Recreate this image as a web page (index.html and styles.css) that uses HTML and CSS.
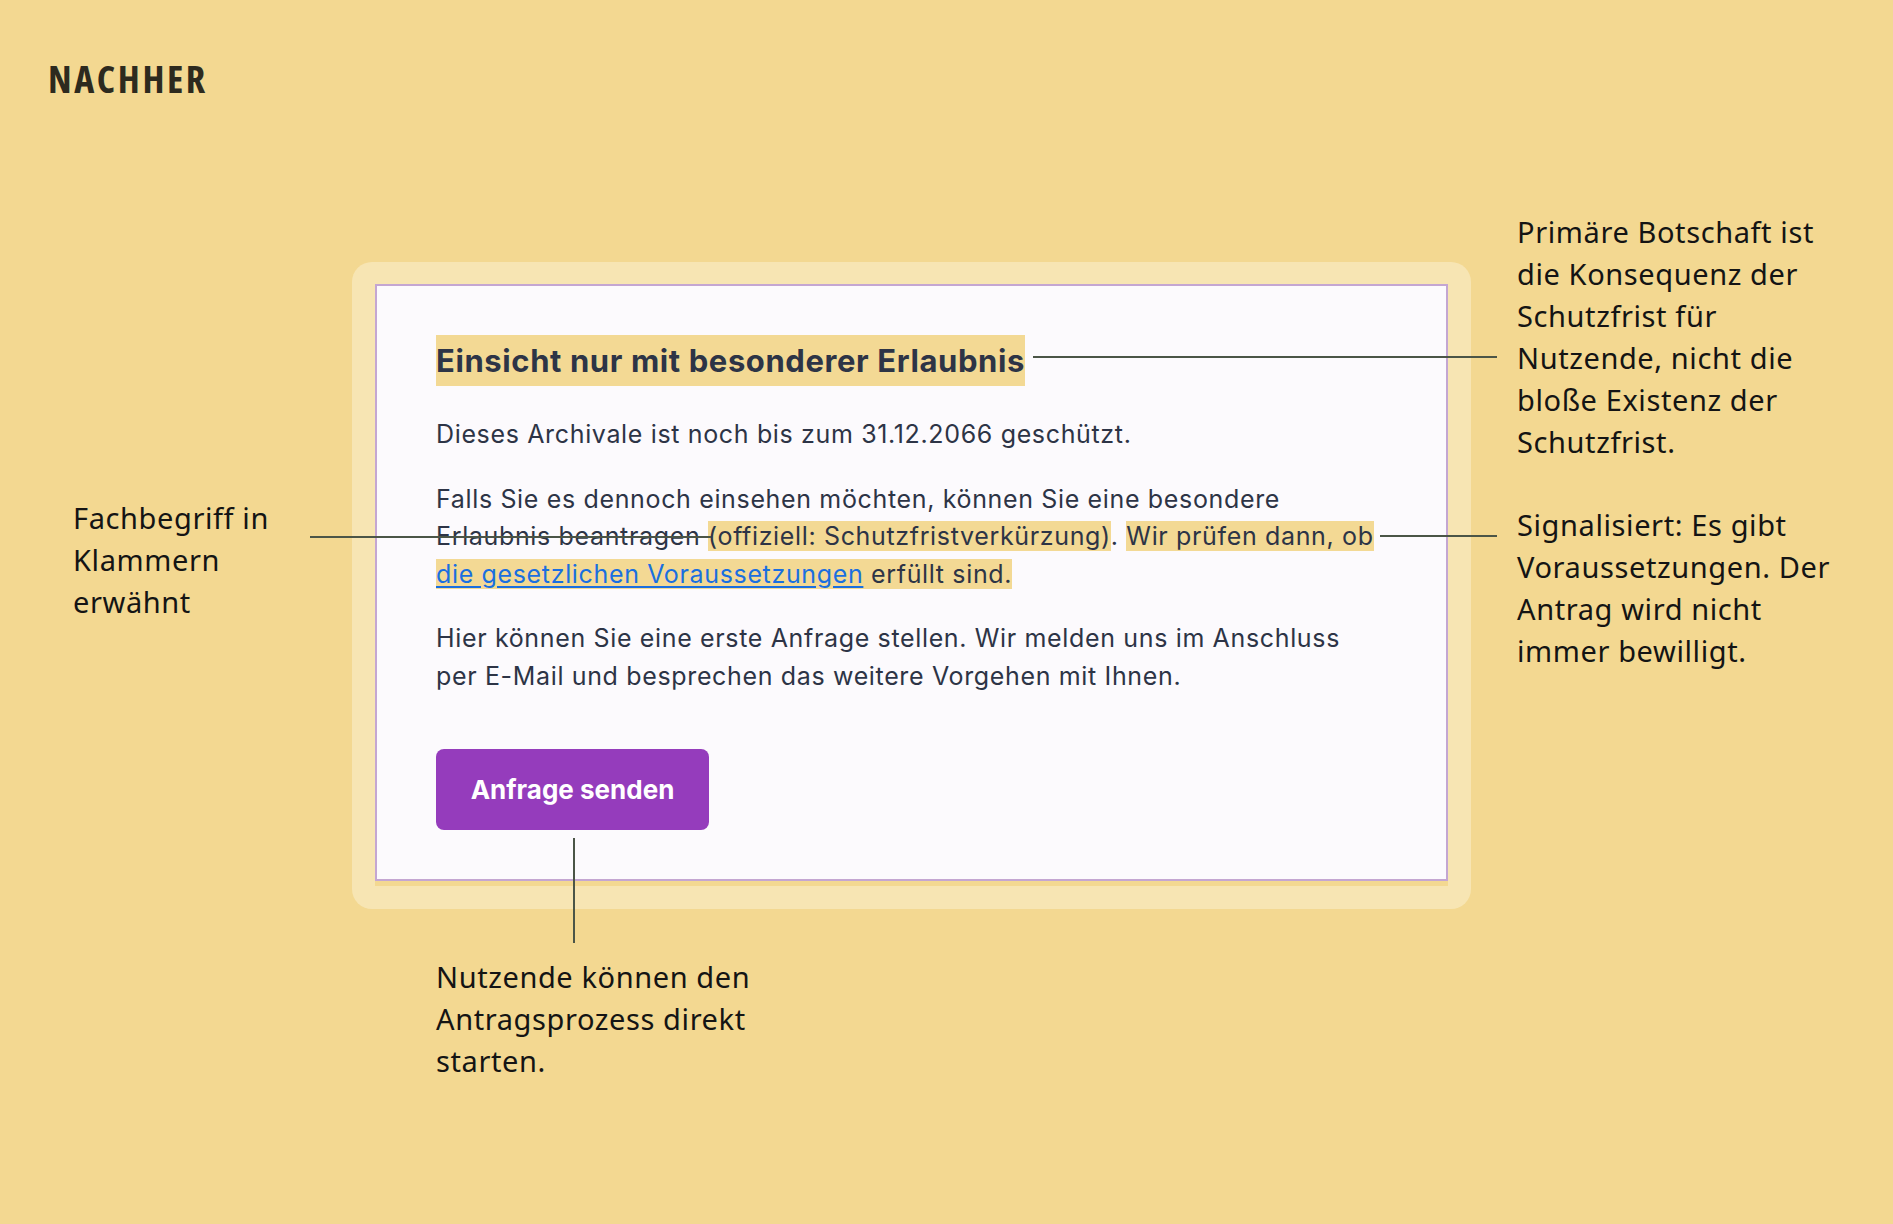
FILE: index.html
```html
<!DOCTYPE html>
<html lang="de">
<head>
<meta charset="utf-8">
<title>Nachher</title>
<link rel="stylesheet" href="styles.css">
</head>
<body>
<div class="page">
  <h1 class="page-title">NACHHER</h1>
  <div class="frame">
    <div class="card">
      <h2 class="card-heading"><span class="mark mark-heading">Einsicht nur mit besonderer Erlaubnis</span></h2>
      <p class="card-text">Dieses Archivale ist noch bis zum 31.12.2066 geschützt.</p>
      <p class="card-text">Falls Sie es dennoch einsehen möchten, können Sie eine besondere Erlaubnis beantragen <span class="mark">(offiziell: Schutzfristverkürzung)</span>. <span class="mark">Wir prüfen dann, ob <a class="card-link" href="#">die gesetzlichen Voraussetzungen</a> erfüllt sind.</span></p>
      <p class="card-text">Hier können Sie eine erste Anfrage stellen. Wir melden uns im Anschluss per E-Mail und besprechen das weitere Vorgehen mit Ihnen.</p>
      <button class="card-button" type="button">Anfrage senden</button>
    </div>
  </div>

  <div class="line line-heading"></div>
  <div class="line line-left"></div>
  <div class="line line-right"></div>
  <div class="line line-button"></div>

  <p class="note note-left">Fachbegriff in<br>Klammern<br>erwähnt</p>
  <p class="note note-right-1">Primäre Botschaft ist<br>die Konsequenz der<br>Schutzfrist für<br>Nutzende, nicht die<br>bloße Existenz der<br>Schutzfrist.</p>
  <p class="note note-right-2">Signalisiert: Es gibt<br>Voraussetzungen. Der<br>Antrag wird nicht<br>immer bewilligt.</p>
  <p class="note note-bottom">Nutzende können den<br>Antragsprozess direkt<br>starten.</p>
</div>
</body>
</html>
```

FILE: styles.css
```css
* { box-sizing: border-box; }

html, body {
  margin: 0;
  padding: 0;
  background: #f3d891;
}

.page {
  position: relative;
  width: 1893px;
  height: 1224px;
  padding: 56px 0 0 48px;
}

.page-title {
  margin: 0;
  font-family: "Open Sans", sans-serif;
  font-stretch: 75%;
  font-weight: 700;
  font-size: 38px;
  line-height: 44px;
  letter-spacing: 2.6px;
  color: #2d2a1e;
}

.frame {
  margin: 162px 0 0 304px;
  width: 1119px;
  height: 647px;
  padding: 22px 23px 28px 23px;
  background: #f7e5b3;
  border-radius: 20px;
}

.card {
  width: 1073px;
  height: 597px;
  border: 2px solid #c4a6d2;
  background: #fcfafd;
  box-shadow: 0 5px 0 #f3d891;
  padding: 49px 60px 0 59px;
  font-family: "Inter", sans-serif;
  color: #2d3446;
}

.card-heading {
  margin: 0 0 30px 0;
  font-size: 31px;
  font-weight: 700;
  line-height: 51px;
  letter-spacing: 0.6px;
}

.mark {
  background: #f3d994;
}

.mark-heading {
  display: inline-block;
}

.card-text {
  margin: 0 0 27px 0;
  font-size: 25px;
  line-height: 37.5px;
  letter-spacing: 0.65px;
}

.card-link {
  color: #1a6fe0;
  text-decoration: underline;
  text-underline-offset: 3px;
}

.card-button {
  margin-top: 27px;
  width: 273px;
  height: 81px;
  border: none;
  border-radius: 8px;
  background: #953cbc;
  color: #ffffff;
  font-family: "Inter", sans-serif;
  font-weight: 700;
  font-size: 26px;
}

.line {
  position: absolute;
  background: #4b5547;
}

.line-heading { left: 1033px; top: 356px; width: 464px; height: 2px; }
.line-left { left: 310px; top: 536px; width: 401px; height: 2px; }
.line-right { left: 1380px; top: 535px; width: 117px; height: 2px; }
.line-button { left: 573px; top: 838px; width: 2px; height: 105px; }

.note {
  position: absolute;
  margin: 0;
  font-family: "Noto Sans", sans-serif;
  font-size: 29px;
  line-height: 42px;
  letter-spacing: 0.6px;
  color: #141414;
}

.note-left { left: 73px; top: 497px; }
.note-right-1 { left: 1517px; top: 211px; }
.note-right-2 { left: 1517px; top: 504px; }
.note-bottom { left: 436px; top: 956px; }
```
